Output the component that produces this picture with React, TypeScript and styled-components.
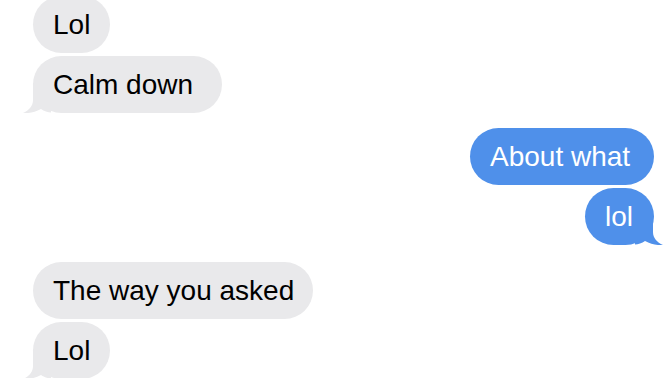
import styled, { createGlobalStyle } from 'styled-components'

const GlobalStyle = createGlobalStyle`
    html, body {
        margin: 0;
        padding: 0;
        background: #ffffff;
        overflow: hidden;
    }
`

const Thread = styled.div`
    width: 672px;
    height: 378px;
    overflow: hidden;
    display: flex;
    flex-direction: column;
    padding: 0 18px 0 33px;
    box-sizing: border-box;
    font-family: "Liberation Sans", Arial, sans-serif;
`

const Row = styled.div<{ $mine?: boolean; $space: number }>`
    display: flex;
    justify-content: ${p => (p.$mine ? 'flex-end' : 'flex-start')};
    margin-top: ${p => p.$space}px;
    flex-shrink: 0;
`

const Bubble = styled.div<{ $mine?: boolean; $width: number }>`
    position: relative;
    width: ${p => p.$width}px;
    height: 57px;
    box-sizing: border-box;
    padding: 0 0 0 20px;
    border-radius: 28.5px;
    display: flex;
    align-items: center;
    font-size: 28px;
    white-space: nowrap;
    color: ${p => (p.$mine ? '#ffffff' : '#000000')};
    background-color: ${p => (p.$mine ? '#4f90ea' : '#e9e9eb')};
`

// little hook under the last bubble of a run
const Tail = styled.svg<{ $mine?: boolean }>`
    position: absolute;
    bottom: 0;
    width: 30px;
    height: 30px;
    ${p => (p.$mine ? 'right: -11px; transform: scaleX(-1);' : 'left: -12px;')}
`

type Msg = { text: string; width: number; mine?: boolean; space: number; tail?: boolean }

const messages: Msg[] = [
    { text: 'Lol', width: 77, space: -4 },
    { text: 'Calm down', width: 189, space: 3, tail: true },
    { text: 'About what', width: 184, mine: true, space: 15 },
    { text: 'lol', width: 69, mine: true, space: 3, tail: true },
    { text: 'The way you asked', width: 280, space: 17 },
    { text: 'Lol', width: 77, space: 3, tail: true },
]

export default function App() {
    return (
        <>
            <GlobalStyle />
            <Thread>
                {messages.map((m, i) => (
                    <Row key={i} $mine={m.mine} $space={m.space}>
                        <Bubble $mine={m.mine} $width={m.width}>
                            {m.tail && (
                                <Tail $mine={m.mine} viewBox="0 0 30 30">
                                    <path
                                        d="M12 0 L12 17 C12 23 8 27.5 2 30 C8 30.6 14 29 20 26 C23 28 27 29.5 30 29.5 L30 0 Z"
                                        fill={m.mine ? '#4f90ea' : '#e9e9eb'}
                                    />
                                </Tail>
                            )}
                            {m.text}
                        </Bubble>
                    </Row>
                ))}
            </Thread>
        </>
    )
}
